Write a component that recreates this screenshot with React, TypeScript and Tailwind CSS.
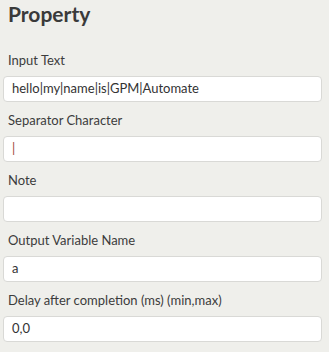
import React from "react";

const fields = [
  { label: "Input Text", value: "hello|my|name|is|GPM|Automate" },
  { label: "Separator Character", value: "|", accent: true },
  { label: "Note", value: "" },
  { label: "Output Variable Name", value: "a" },
  { label: "Delay after completion (ms) (min,max)", value: "0,0" },
];

export default function App() {
  return (
    <div className="min-h-screen w-[329px] bg-[#efefeb] px-[3px] font-['Lato',sans-serif] text-[#333]">
      <h1 className="h-[42px] pl-[5px] text-[21px] font-bold leading-[28px] text-[#3a3a3a]">
        Property
      </h1>
      {fields.map((f) => (
        <div key={f.label}>
          <div className="mt-[9px] mb-[7px] pl-[5px] text-[13px] leading-[18px] text-[#3c3c3c]">
            {f.label}
          </div>
          <div
            className={`flex h-[26px] w-[319px] items-center rounded-[4px] border border-[#d9d9d6] bg-white pl-[8px] text-[13px] ${
              f.accent ? "text-[#a0463c]" : "text-[#333]"
            }`}
          >
            {f.value}
          </div>
        </div>
      ))}
    </div>
  );
}
